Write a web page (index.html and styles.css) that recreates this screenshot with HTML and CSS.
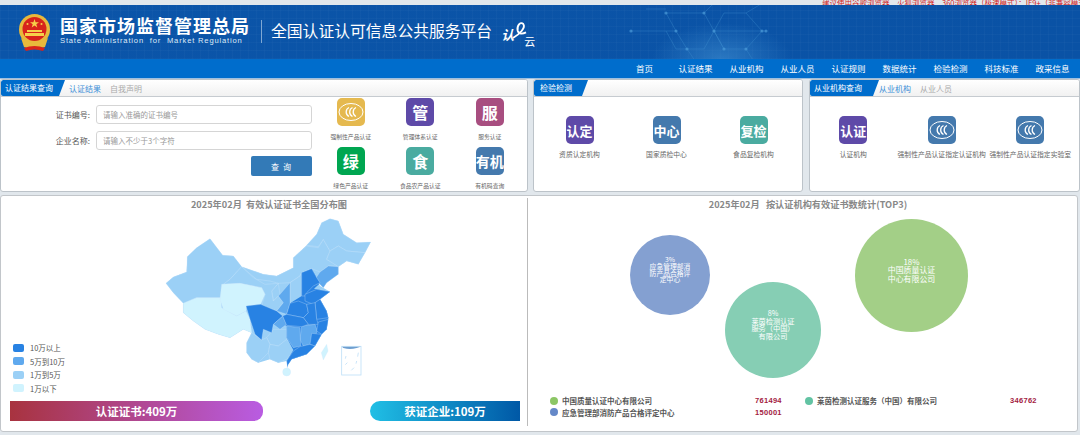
FILE: index.html
```html
<!DOCTYPE html>
<html lang="zh">
<head>
<meta charset="utf-8">
<title>全国认证认可信息公共服务平台</title>
<link rel="stylesheet" href="styles.css">
</head>
<body>
<div class="notice"><span>建议使用谷歌浏览器、火狐浏览器、360浏览器（极速模式）；IE9+（非兼容模式浏览器）</span></div>
<header class="banner">
  <svg class="emblem" viewBox="0 0 33 38">
    <circle cx="16.5" cy="15.5" r="15.5" fill="#e8b93c"/>
    <circle cx="16.5" cy="15" r="12" fill="#d8231c"/>
    <polygon points="16.5,5 17.6,8.2 21,8.2 18.3,10.2 19.3,13.4 16.5,11.4 13.7,13.4 14.7,10.2 12,8.2 15.4,8.2" fill="#f6d04a"/>
    <circle cx="9.5" cy="10" r="1" fill="#f6d04a"/><circle cx="23.5" cy="10" r="1" fill="#f6d04a"/>
    <rect x="9" y="16" width="15" height="2" fill="#f6d04a"/><rect x="7" y="19" width="19" height="3" fill="#f6d04a"/>
    <path d="M3 24 Q16.5 34 30 24 L27 33 Q16.5 37 6 33Z" fill="#e8b93c"/>
    <path d="M6 34 Q16.5 30 27 34 L25 37 Q16.5 34 8 37Z" fill="#d8231c"/>
  </svg>
  <div class="agency">
    <div class="agency-cn">国家市场监督管理总局</div>
    <div class="agency-en">State Administration&nbsp; for&nbsp; Market Regulation</div>
  </div>
  <div class="divider"></div>
  <div class="platform">全国认证认可信息公共服务平台</div>
  <div class="brand">
    <span class="brand-ren">认</span>
    <svg class="brand-loop" viewBox="0 0 16 20"><path d="M1 18 C8 14 15 7 12 3 C9 0 5 5 6 10 C7 14 11 14 15 12" fill="none" stroke="#fff" stroke-width="2"/></svg>
    <span class="brand-yun">云</span>
  </div>
  <svg class="network" viewBox="0 0 190 54">
    <g fill="none" stroke="#3f8fd0" stroke-opacity=".45" stroke-width=".8">
      <path d="M15 26H60M60 26L50 8H88L98 26H150M98 26L88 44H60L50 26M98 26L108 44M60 26L71 44M108 44H130M108 44L98 26M130 44L146 26L130 8H108L98 26"/>
      <path d="M30 4H50M88 8L100 -4M130 8L150 -4M71 44L82 60M130 44L140 60"/>
    </g>
    <g fill="#4a9ad8" fill-opacity=".7">
      <circle cx="15" cy="26" r="1.6"/><circle cx="50" cy="8" r="1.6"/><circle cx="88" cy="8" r="1.6"/><circle cx="60" cy="26" r="1.6"/><circle cx="98" cy="26" r="1.6"/><circle cx="150" cy="26" r="1.6"/><circle cx="71" cy="44" r="1.6"/><circle cx="108" cy="44" r="1.6"/><circle cx="130" cy="44" r="1.6"/><circle cx="146" cy="26" r="1.6"/>
    </g>
  </svg>
</header>
<nav class="menu">
  <a>首页</a><a>认证结果</a><a>从业机构</a><a>从业人员</a><a>认证规则</a><a>数据统计</a><a>检验检测</a><a>科技标准</a><a>政采信息</a>
</nav>
<main>
  <section class="cards">
    <div class="panel panel-query">
      <div class="panel-head">
        <span class="tab tab-query">认证结果查询</span>
        <a class="link active">认证结果</a><a class="link">自我声明</a>
      </div>
      <div class="query-body">
        <form class="search">
          <div class="field"><label>证书编号:</label><input placeholder="请输入准确的证书编号"></div>
          <div class="field"><label>企业名称:</label><input placeholder="请输入不少于3个字符"></div>
          <button type="button">查 询</button>
        </form>
        <div class="icon-grid">
          <div class="item"><span class="ico gold"><svg class="ccc" viewBox="0 0 28 28"><use href="#ccc"/></svg></span><span class="cap">强制性产品认证</span></div>
          <div class="item"><span class="ico purple one">管</span><span class="cap">管理体系认证</span></div>
          <div class="item"><span class="ico rose one">服</span><span class="cap">服务认证</span></div>
          <div class="item"><span class="ico green one">绿</span><span class="cap">绿色产品认证</span></div>
          <div class="item"><span class="ico teal one">食</span><span class="cap">食品农产品认证</span></div>
          <div class="item"><span class="ico steel">有机</span><span class="cap">有机码查询</span></div>
        </div>
      </div>
    </div>
    <div class="panel panel-test">
      <div class="panel-head"><span class="tab tab-test">检验检测</span></div>
      <div class="tri-body test-body">
        <div class="item"><span class="ico purple">认定</span><span class="cap">资质认定机构</span></div>
        <div class="item"><span class="ico steel">中心</span><span class="cap">国家质检中心</span></div>
        <div class="item"><span class="ico teal">复检</span><span class="cap">食品复检机构</span></div>
      </div>
    </div>
    <div class="panel panel-org">
      <div class="panel-head">
        <span class="tab tab-org">从业机构查询</span>
        <a class="link active">从业机构</a><a class="link">从业人员</a>
      </div>
      <div class="tri-body org-body">
        <div class="item"><span class="ico purple">认证</span><span class="cap">认证机构</span></div>
        <div class="item"><span class="ico steel"><svg class="ccc" viewBox="0 0 28 28"><use href="#ccc"/></svg></span><span class="cap">强制性产品认证指定认证机构</span></div>
        <div class="item"><span class="ico steel"><svg class="ccc" viewBox="0 0 28 28"><use href="#ccc"/></svg></span><span class="cap">强制性产品认证指定实验室</span></div>
      </div>
    </div>
  </section>
  <section class="stats">
    <div class="chart chart-map">
      <h2 class="chart-title">2025年02月&nbsp; 有效认证证书全国分布图</h2>
      <svg class="map" viewBox="0 0 780 570">
        <polygon fill="#9bd0f6" points="108,262 130,243 170,228 172,182 200,155 240,128 278,178 310,180 335,212 400,235 440,240 490,215 490,185 530,148 560,115 575,80 600,68 625,75 640,115 680,140 722,138 705,170 685,205 650,195 625,212 625,235 590,260 580,275 565,260 570,270 600,287 570,310 590,345 595,365 590,400 575,415 555,450 530,475 485,490 475,505 470,495 445,500 420,490 385,500 365,490 350,470 350,440 365,410 340,400 300,425 265,415 225,400 190,375 160,350 160,322 130,290"/>
        <g stroke="#cfe6fa" stroke-opacity=".75" stroke-width="1.2" stroke-linejoin="round">
          <g fill="#9bd0f6">
            <polygon points="108,262 130,243 170,228 172,182 200,155 240,128 278,178 310,180 335,212 300,250 280,265 272,305 200,305 160,322 130,290"/>
            <polygon points="335,212 400,235 440,240 490,215 490,185 530,150 565,155 580,130 600,165 590,190 625,210 595,210 570,228 545,218 515,230 510,240 480,260 445,262 420,255 380,250 350,225"/>
            <polygon points="530,148 560,115 575,80 600,68 625,75 640,115 680,140 722,138 705,170 650,165 625,150 600,165 580,130 565,152"/>
            <polygon points="600,165 625,150 650,165 705,170 685,205 650,195 625,212 590,190"/>
            <polygon points="480,260 510,240 515,230 515,300 505,315 480,322"/>
            <polygon points="425,285 445,262 450,295 430,315"/>
            <polygon points="300,250 335,212 370,245 405,265 445,262 425,285 430,315 445,300 460,320 440,345 395,330 405,295 395,275 330,262 280,265"/>
            <polygon points="410,425 430,400 470,400 472,430 445,450 420,445"/>
            <polygon points="350,440 365,410 395,432 410,425 420,445 415,470 385,500 365,490 350,470"/>
            <polygon points="415,470 420,445 445,450 470,430 490,455 490,465 470,490 445,500 420,490"/>
          </g>
          <g fill="#d0f3fe">
            <polygon points="160,322 200,305 272,305 275,335 320,360 348,345 360,370 365,410 340,400 300,425 265,415 225,400 190,375 160,350"/>
            <polygon points="275,265 330,262 395,275 405,295 392,325 350,330 348,345 320,360 280,340 270,310"/>
            <circle cx="470" cy="528" r="12"/>
            <polygon points="590,445 594,465 580,492 574,470"/>
          </g>
          <polygon fill="#2882e3" stroke="none" points="515,230 545,218 570,262 552,278 600,287 570,310 590,345 595,365 590,400 575,415 555,450 530,475 485,490 475,505 470,495 490,462 470,425 470,390 460,385 470,355 480,322 515,300"/>
          <g fill="#5fa9ee">
            <polygon points="570,228 595,210 625,212 625,235 590,260 580,275 565,260 555,250"/>
            <polygon points="445,300 450,295 480,260 480,322 470,355 440,345 460,320"/>
            <polygon points="430,385 458,360 470,385 450,400"/>
            <polygon points="515,390 555,385 562,405 545,445 520,450 510,430"/>
            <polygon points="470,390 510,395 512,450 490,455 470,425"/>
          </g>
          <g fill="#2882e3">
            <polygon points="515,230 545,218 560,245 570,260 550,270 530,290 525,300 515,300"/>
            <polygon points="525,295 560,280 600,287 570,310 550,325 525,315"/>
            <polygon points="480,322 505,315 530,325 535,350 520,365 470,355"/>
            <polygon points="555,320 570,310 590,345 595,365 560,370"/>
            <polygon points="530,325 555,320 560,370 565,385 535,385 520,365 535,350"/>
            <polygon points="470,355 520,365 535,385 515,392 470,388 458,360"/>
            <polygon points="348,330 392,325 440,345 458,360 430,385 425,410 400,400 395,432 375,415 360,370"/>
            <polygon points="565,378 595,370 590,400 575,415 560,405"/>
            <polygon points="545,412 575,415 555,450 540,445"/>
            <polygon points="490,465 510,452 540,445 555,450 530,475 485,490 475,505 472,515 470,495"/>
          </g>
        </g>
        <rect x="635" y="451" width="58" height="86" fill="#fff" stroke="#bfe0f8" stroke-width="2.5"/>
        <path d="M636 452H692L680 456Q660 462 640 456Z" fill="#6f9fd0"/>
        <path d="M648 480l-2 8M652 500l-6 6M672 515l-8 8M685 470l-2 12M680 495l-2 8" stroke="#bfe0f8" stroke-width="2.5" fill="none"/>
      </svg>
      <ul class="map-legend">
        <li><i class="sw s1"></i>10万以上</li>
        <li><i class="sw s2"></i>5万到10万</li>
        <li><i class="sw s3"></i>1万到5万</li>
        <li><i class="sw s4"></i>1万以下</li>
      </ul>
      <div class="totals">
        <div class="total total-cert">认证证书:409万</div>
        <div class="total total-ent">获证企业:109万</div>
      </div>
    </div>
    <div class="chart chart-top">
      <h2 class="chart-title">2025年02月&nbsp;&nbsp; 按认证机构有效证书数统计(TOP3)</h2>
      <div class="bubble b-blue"><span>3%<br>应急管理部消<br>防产品合格评<br>定中心</span></div>
      <div class="bubble b-teal"><span>8%<br>莱茵检测认证<br>服务（中国）<br>有限公司</span></div>
      <div class="bubble b-green"><span>18%<br>中国质量认证<br>中心有限公司</span></div>
      <div class="top-legend">
        <div class="row"><i class="dot d-green"></i><span class="nm">中国质量认证中心有限公司</span><b>761494</b></div>
        <div class="row"><i class="dot d-teal"></i><span class="nm">莱茵检测认证服务（中国）有限公司</span><b>346762</b></div>
        <div class="row"><i class="dot d-blue"></i><span class="nm">应急管理部消防产品合格评定中心</span><b>150001</b></div>
      </div>
    </div>
  </section>
</main>
<svg class="defs" width="0" height="0">
  <defs>
    <g id="ccc" fill="none" stroke="#fff">
      <ellipse cx="14" cy="14" rx="12" ry="8.5" stroke-width="1"/>
      <path d="M12 9.5A5 5 0 0 0 12 18.5M15.5 9.5A5 5 0 0 0 15.5 18.5M19 9.5A5 5 0 0 0 19 18.5" stroke-width="1.3"/>
    </g>
  </defs>
</svg>
</body>
</html>
```
FILE: styles.css
```css
* { box-sizing: border-box; }
html, body { margin: 0; padding: 0; }
body {
  width: 1080px;
  height: 435px;
  overflow: hidden;
  background: #e1e7ec;
  font-family: "Noto Sans CJK SC", "Liberation Sans", sans-serif;
  color: #555;
}
.defs { position: absolute; }

.notice {
  height: 5px;
  overflow: hidden;
  padding-left: 822px;
  color: #d01c1c;
  font-size: 7.5px;
  line-height: 4px;
  white-space: nowrap;
  display: flex;
  align-items: flex-end;
}
.banner {
  position: relative;
  height: 54px;
  display: flex;
  align-items: flex-start;
  padding-left: 18px;
  overflow: hidden;
  background:
    radial-gradient(ellipse 70px 36px at 722px 54px, rgba(70,150,215,.55), transparent),
    repeating-linear-gradient(90deg, rgba(255,255,255,.025) 0 1px, transparent 1px 8px),
    repeating-linear-gradient(0deg, rgba(255,255,255,.025) 0 1px, transparent 1px 8px),
    linear-gradient(90deg, #0b55a9, #0a52a5);
}
.emblem { width: 33px; height: 38px; margin-top: 9px; flex: none; }
.agency { margin-left: 9px; width: 192px; color: #fff; }
.agency-cn { margin-top: 9px; font-size: 18px; line-height: 22px; font-weight: 700; letter-spacing: 1px; white-space: nowrap; }
.agency-en { font-family: "Liberation Sans", sans-serif; font-size: 7.6px; line-height: 10px; letter-spacing: .82px; white-space: nowrap; color: #dce9f7; }
.divider { width: 1px; height: 23px; margin: 15px 0 0 9px; background: #7fa8d4; flex: none; }
.platform { margin: 14px 0 0 9px; font-size: 15.8px; line-height: 24px; color: #fff; white-space: nowrap; }
.brand { position: relative; width: 36px; height: 30px; margin: 14px 0 0 9px; color: #fff; }
.brand-ren { position: absolute; left: 0; top: 9px; font-size: 13px; line-height: 14px; font-style: italic; font-weight: 700; }
.brand-loop { position: absolute; left: 11px; top: 2px; width: 15px; height: 19px; }
.brand-yun { position: absolute; left: 23px; top: 16px; font-size: 11px; line-height: 12px; }
.network { position: absolute; left: 616px; top: 0; width: 190px; height: 54px; }

.menu {
  height: 19px;
  background: #006dcc;
  display: flex;
  justify-content: flex-end;
  padding-right: 2px;
}
.menu a { width: 51px; text-align: center; color: #fff; font-size: 8.5px; line-height: 19px; white-space: nowrap; }

.cards { display: flex; height: 114px; padding-top: 1px; border-top: 0; background: linear-gradient(#9ec0e0 0 1px, transparent 1px); }
.panel { background: #fff; border: 1px solid #bcc3c9; border-radius: 3px; overflow: hidden; }
.panel-query { width: 528px; }
.panel-test { width: 270px; margin-left: 5px; }
.panel-org { width: 271px; margin-left: 6px; flex: none; }
.panel-head {
  height: 17px;
  display: flex;
  align-items: center;
  border-bottom: 1px solid #c6cbd0;
  background: linear-gradient(#fff, #f1f1f1);
  font-size: 8px;
}
.tab { height: 16px; line-height: 15px; color: #fff; background: #006dcc; white-space: nowrap; flex: none; border-radius: 2px 0 0 2px; clip-path: polygon(0 0, 100% 0, calc(100% - 6px) 100%, 0 100%); }
.tab-query { width: 64px; padding-left: 4px; }
.tab-test { width: 54px; padding-left: 6px; }
.tab-org { width: 69px; padding-left: 4px; }
.link { color: #aaa; margin-left: 9px; white-space: nowrap; }
.link.active { color: #3d8fd8; margin-left: 4px; }
.tab-org + .link.active { margin-left: 0; }

.query-body { display: flex; height: 95px; }
.search { width: 316px; flex: none; padding-top: 8px; display: flex; flex-direction: column; }
.field { display: flex; align-items: center; height: 19px; margin-bottom: 7px; }
.field label { width: 89px; text-align: right; font-size: 8px; color: #555; white-space: nowrap; }
.field input {
  width: 216px; height: 19px; margin-left: 6px;
  border: 1px solid #d5d5d5; border-radius: 3px; padding: 0 6px;
  font: 7.5px "Noto Sans CJK SC", sans-serif; outline: none;
}
.field input::placeholder { color: #999; }
button {
  align-self: flex-end;
  width: 61px; height: 20px; margin: -1px 5px 0 0;
  background: #337ab7; color: #fff; border: 0; border-radius: 2px;
  font: 8px "Noto Sans CJK SC", sans-serif; letter-spacing: 1px;
}
.icon-grid { display: grid; grid-template-columns: repeat(3, 69.5px); grid-auto-rows: 49px; padding-top: 1px; margin-left: -1px; }
.item { display: flex; flex-direction: column; align-items: center; min-width: 0; }
.ico {
  width: 28px; height: 28px; flex: none;
  border-radius: 5px; color: #fff;
  display: flex; align-items: center; justify-content: center;
  font-size: 14px; font-weight: 700; white-space: nowrap; line-height: 1;
}
.ico.one { font-size: 16px; }
.tri-body .ico { font-size: 13px; }
.ccc { width: 28px; height: 28px; }
.gold { background: #e5b94f; }
.purple { background: #5e4aa8; }
.rose { background: #a84e80; }
.green { background: #00a651; }
.teal { background: #4aaba0; }
.steel { background: #4479ad; }
.cap { margin-top: 7px; font-size: 5.8px; line-height: 8px; color: #666; white-space: nowrap; }
.tri-body { display: grid; padding-top: 19px; }
.test-body { grid-template-columns: repeat(3, 87px); padding-left: 2px; }
.org-body { grid-template-columns: repeat(3, 88.5px); margin-left: -1px; }
.tri-body .cap { font-size: 6.8px; margin-top: 6px; }

.stats {
  display: flex;
  height: 237px;
  margin-top: 3px;
  width: 1078px;
  background: #fff;
  border: 1px solid #c2c6ca;
  border-radius: 3px;
}
.chart { position: relative; height: 228px; }
.chart-map { width: 527px; border-right: 1px solid #bbb; margin-top: 2px; }
.chart-top { flex: 1; margin-top: 2px; }
.chart-title { margin: 0; text-align: center; font-size: 9.2px; line-height: 12px; font-weight: 700; color: #888; white-space: nowrap; }
.chart-map .chart-title { padding-left: 10px; }
.chart-top .chart-title { padding-left: 11px; }
.map { position: absolute; left: 129px; top: -2px; width: 260px; height: 190px; }
.map-legend { position: absolute; left: 12px; top: 143px; margin: 0; padding: 0; list-style: none; font-size: 7.5px; color: #555; }
.map-legend li { display: flex; align-items: center; height: 13.5px; white-space: nowrap; }
.sw { width: 11px; height: 8px; border-radius: 2px; margin-right: 6px; }
.s1 { background: #2882e3; }
.s2 { background: #5fa9ee; }
.s3 { background: #9bd0f6; }
.s4 { background: #d0f3fe; }
.totals { position: absolute; left: 9px; top: 203px; width: 510px; display: flex; justify-content: space-between; }
.total { height: 20px; line-height: 20px; text-align: center; color: #fff; font-size: 11.5px; font-weight: 700; white-space: nowrap; }
.total-cert { width: 253px; background: linear-gradient(90deg, #a8333f, #b95ce2); border-radius: 0 9px 9px 0; }
.total-ent { width: 150px; background: linear-gradient(90deg, #20bfe5, #0058a6); border-radius: 10px 0 0 10px; }

.bubble { position: absolute; border-radius: 50%; color: #fff; text-align: center; display: flex; justify-content: center; }
.b-blue { left: 102px; top: 37px; width: 80px; height: 80px; background: #84a0d1; font-size: 6.8px; line-height: 6.8px; padding-top: 21px; }
.b-teal { left: 197px; top: 84px; width: 96px; height: 96px; background: #86ceb4; font-size: 7.2px; line-height: 7.6px; padding-top: 28px; }
.b-green { left: 327px; top: 21px; width: 113px; height: 113px; background: #a3cf87; font-size: 7.9px; line-height: 8.3px; padding-top: 39px; }
.top-legend { position: absolute; left: 22px; top: 197px; width: 500px; display: grid; grid-template-columns: 255px 240px; grid-auto-rows: 11.5px; font-size: 7.5px; }
.row { position: relative; display: flex; align-items: center; white-space: nowrap; }
.dot { width: 8px; height: 8px; border-radius: 50%; margin-right: 4px; flex: none; }
.d-green { background: #8cc665; }
.d-teal { background: #62c3a3; }
.d-blue { background: #6588c8; }
.nm { font-weight: 700; color: #555; }
.row b { position: absolute; left: 205px; color: #a3213f; font-size: 7.5px; font-family: "Liberation Sans", sans-serif; letter-spacing: .3px; }
```
